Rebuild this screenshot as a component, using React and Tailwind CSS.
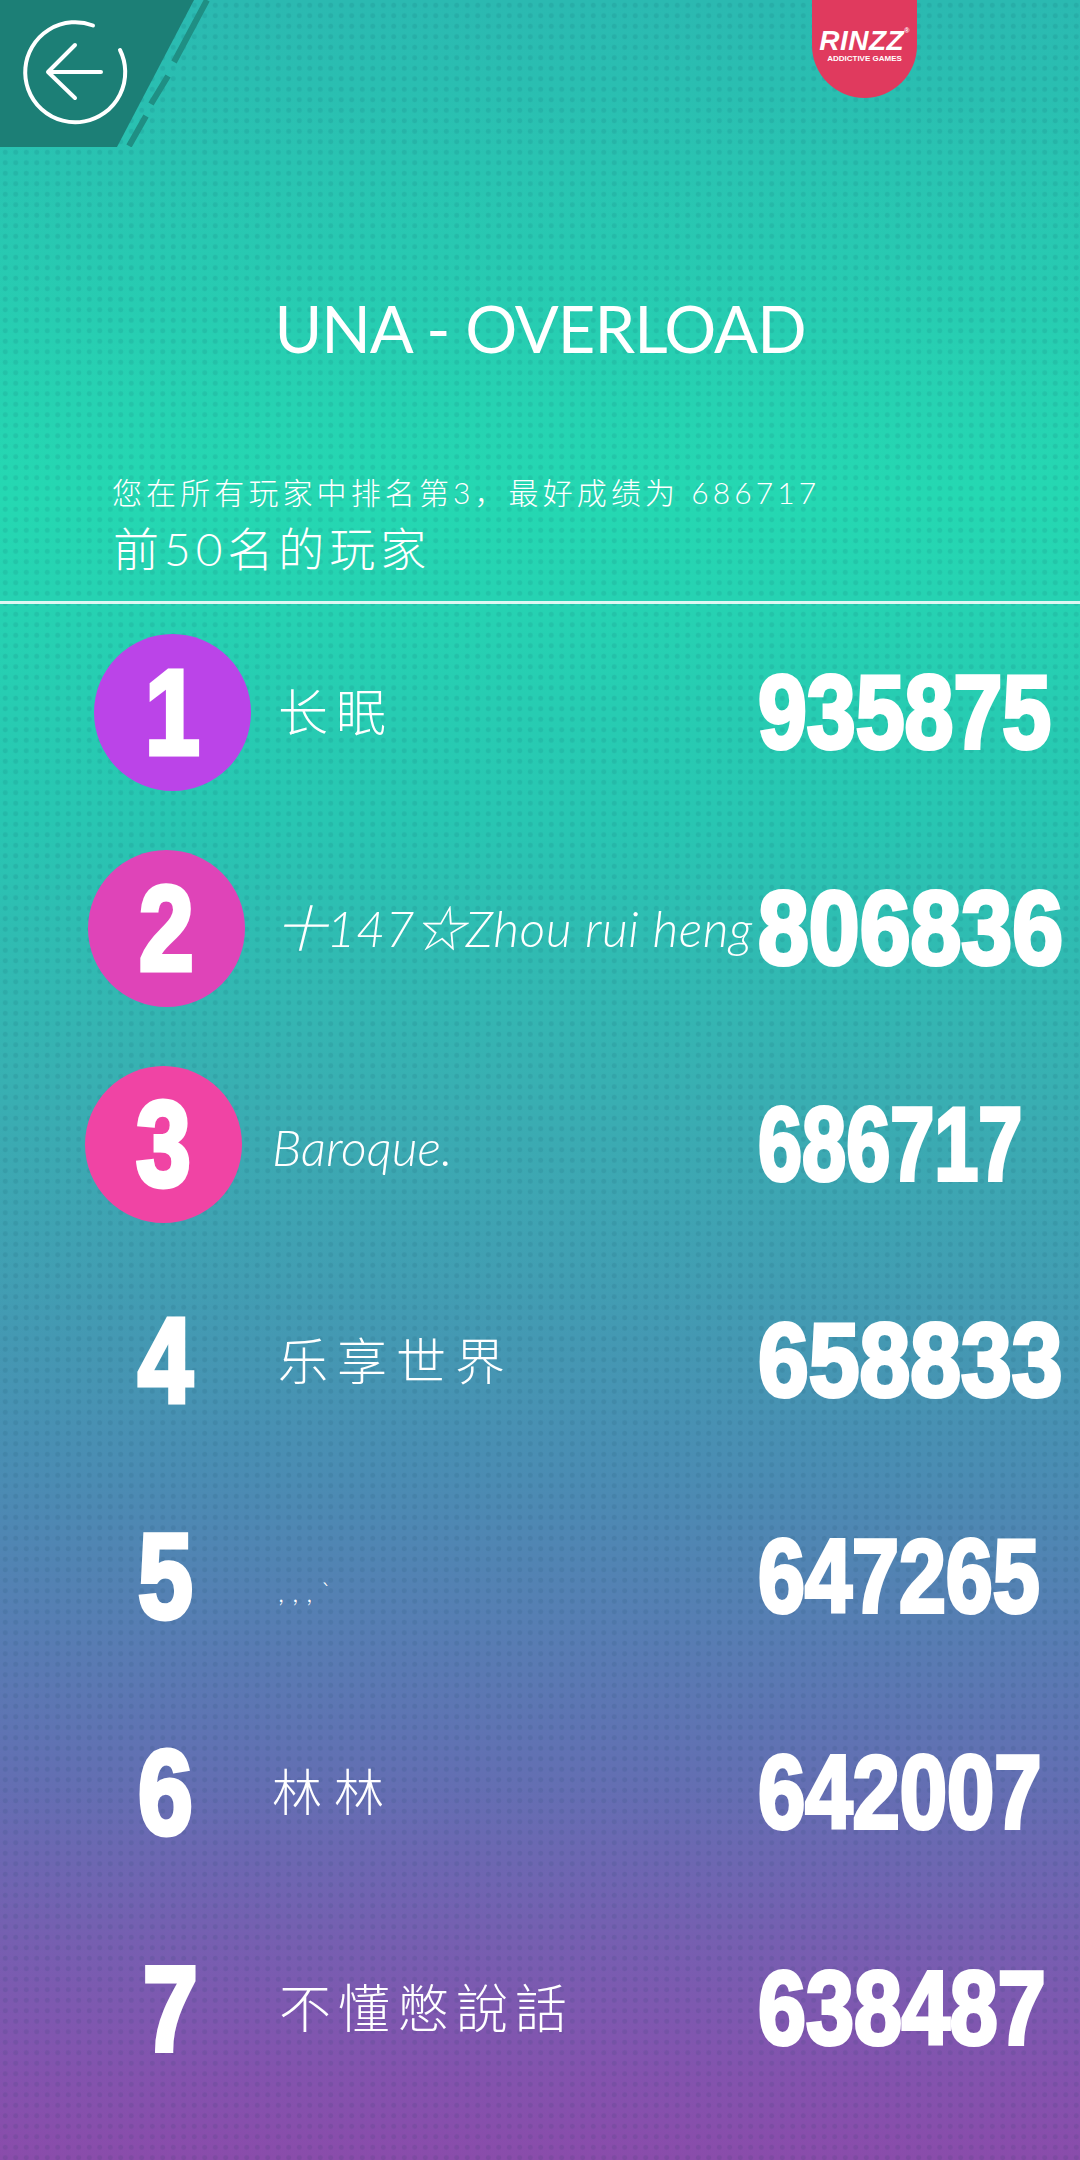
const rows = [
  { rank: "1", name: "长眠", score: "935875", circle: "bg-[#bb44e8]", rankCell: "ml-[94px]", nameClass: "ml-[27px] text-[50px] tracking-[8px] font-light", scoreClass: "scale-x-[0.845]" },
  { rank: "2", name: "十147☆Zhou rui heng", score: "806836", circle: "bg-[#df44b8]", rankCell: "ml-[88px]", nameClass: "ml-[31px] text-[50px] italic font-light tracking-[0.5px]", scoreClass: "scale-x-[0.879]" },
  { rank: "3", name: "Baroque.", score: "686717", circle: "bg-[#f044a4]", rankCell: "ml-[85px]", nameClass: "ml-[30px] mt-[6px] text-[50px] italic font-light", scoreClass: "scale-x-[0.762]" },
  { rank: "4", name: "乐享世界", score: "658833", circle: "", rankCell: "ml-[87px]", nameClass: "ml-[34px] mt-[2px] text-[50px] tracking-[9px] font-light", scoreClass: "scale-x-[0.877]" },
  { rank: "5", name: ",,,`", score: "647265", circle: "", rankCell: "ml-[87px]", nameClass: "ml-[34px] mt-[30px] text-[28px] tracking-[8px] font-light", scoreClass: "scale-x-[0.812]" },
  { rank: "6", name: "林林", score: "642007", circle: "", rankCell: "ml-[87px]", nameClass: "ml-[28px] text-[50px] tracking-[12px] font-light", scoreClass: "scale-x-[0.817]" },
  { rank: "7", name: "不懂憋說話", score: "638487", circle: "", rankCell: "ml-[92px]", nameClass: "ml-[30px] text-[52px] tracking-[7px] font-light", scoreClass: "scale-x-[0.829]" },
];

function BackTab() {
  return (
    <svg width="212" height="147" viewBox="0 0 212 147" fill="none">
      <path d="M0 0H194L117 147H0Z" fill="#1c7f76" />
      <path d="M207 0L174 62M168 76L151 104M146 116L129 146" stroke="#1f8f84" strokeWidth="6" />
      <path d="M93 25.500A50 50 0 1 0 120 50" stroke="white" strokeWidth="4" strokeLinecap="round" />
      <path d="M101 72H49M75 45L48 72L75 98" stroke="white" strokeWidth="4" strokeLinecap="round" strokeLinejoin="round" />
    </svg>
  );
}

function Logo() {
  return (
    <div className="mr-[163px] flex h-[98px] w-[105px] flex-col items-center rounded-b-[53px] bg-[#e03a5e] pt-[27px] text-white">
      <div className="font-['Liberation_Sans'] text-[28px] leading-[28px] font-bold tracking-[0.5px] italic">
        RINZZ<span className="align-top text-[7px] leading-none not-italic">®</span>
      </div>
      <div className="font-['Liberation_Sans'] text-[8px] leading-[8px] font-bold whitespace-nowrap">ADDICTIVE GAMES</div>
    </div>
  );
}

function Row({ row }) {
  return (
    <div className="flex h-[216px] items-center">
      <div className={`flex h-[157px] w-[157px] shrink-0 items-center justify-center rounded-full ${row.circle} ${row.rankCell}`}>
        <span className="scale-x-[0.82] font-['Liberation_Sans'] text-[120px] leading-none font-bold text-white [-webkit-text-stroke:5px_white]">
          {row.rank}
        </span>
      </div>
      <div className={`min-w-0 flex-1 whitespace-nowrap text-white ${row.nameClass}`}>{row.name}</div>
      <div className="w-[322px] shrink-0">
        <div className={`w-fit origin-left font-['Liberation_Sans'] text-[104px] leading-none font-bold text-white [-webkit-text-stroke:4px_white] ${row.scoreClass}`}>
          {row.score}
        </div>
      </div>
    </div>
  );
}

export default function App() {
  return (
    <div className="flex h-[2160px] w-[1080px] flex-col overflow-hidden bg-[radial-gradient(circle,rgba(0,50,70,0.09)_2px,transparent_3px),linear-gradient(180deg,#2bb9b1_0%,#25d8b2_23%,#28c6b2_38%,#38b0b2_50%,#4a8db3_68%,#6270b3_82%,#7e58b0_93%,#8a4cab_100%)] bg-[length:10.500px_10.500px,100%_100%] font-['Lato','Noto_Sans_CJK_SC',sans-serif]">
      <div className="h-[604px] shrink-0 border-b-[3px] border-white/85">
        <div className="flex items-start justify-between">
          <BackTab />
          <Logo />
        </div>
        <div className="mt-[140px] text-center text-[65px] leading-[82px] tracking-[-1px] text-white">UNA - OVERLOAD</div>
        <div className="mt-[105px] ml-[112px] text-[30px] leading-[36px] font-light tracking-[4.100px] text-white">您在所有玩家中排名第3，最好成绩为 686717</div>
        <div className="mt-[12px] ml-[113px] text-[46px] leading-[54px] font-light tracking-[5px] text-white">前50名的玩家</div>
      </div>
      {rows.map((r) => (
        <Row key={r.rank} row={r} />
      ))}
    </div>
  );
}
